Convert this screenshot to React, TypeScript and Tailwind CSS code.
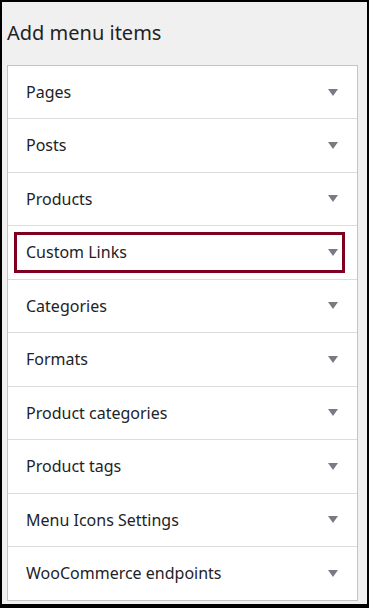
const items = [
  'Pages',
  'Posts',
  'Products',
  'Custom Links',
  'Categories',
  'Formats',
  'Product categories',
  'Product tags',
  'Menu Icons Settings',
  'WooCommerce endpoints',
];

function Caret() {
  return (
    <svg width="10" height="7" viewBox="0 0 10 7" className="shrink-0">
      <path d="M0 0 H10 L5 7 Z" fill="#787c82" />
    </svg>
  );
}

export default function App() {
  return (
    <div
      className="w-[369px] h-[608px] box-border bg-[#f0f0f0] border-black border-t-2 border-l-2 border-r-2 border-b-4 text-[#1d2327] overflow-hidden"
      style={{ fontFamily: '"Noto Sans", "Open Sans", sans-serif' }}
    >
      <h2 className="pl-[5px] pt-[18px] h-[63px] text-[20px] leading-[26px] font-normal">Add menu items</h2>
      <div className="ml-[5px] w-[351px] bg-white border border-[#c3c4c7]">
        {items.map((label, i) => (
          <div
            key={label}
            className={`relative flex items-center justify-between pl-[18px] pr-[19px] ${
              i > 0 ? 'h-[53.5px] border-t border-[#dcdcde]' : 'h-[52px]'
            }`}
          >
            <span className="text-[16px] leading-5">{label}</span>
            <Caret />
            {label === 'Custom Links' && (
              <div className="absolute left-[6px] right-[12px] top-[6px] h-[41px] border-[3px] border-[#800020] pointer-events-none" />
            )}
          </div>
        ))}
      </div>
    </div>
  );
}
